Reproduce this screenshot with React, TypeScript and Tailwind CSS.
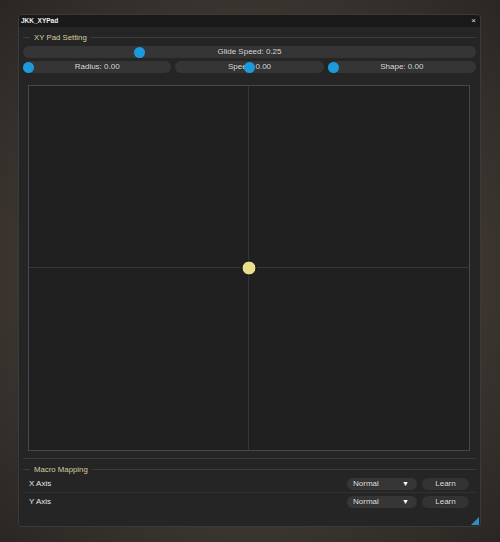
import React from "react";

const font = { fontFamily: '"Liberation Sans", Arial, sans-serif' };

function Slider({ label, value, min, max, width }: { label: string; value: number; min: number; max: number; width: string }) {
  const t = (value - min) / (max - min);
  return (
    <div className={`relative h-[12px] ${width} rounded-full bg-[#353535] flex items-center justify-center`}>
      <span className="text-[8px] text-[#e4e4e4] leading-none [text-shadow:0_0_1px_#000]">{label}</span>
      <div
        className="absolute top-[0.5px] w-[11px] h-[11px] rounded-full bg-[#1c9bdc]"
        style={{ left: `calc(${t * 100}% - ${t * 11}px)` }}
      />
    </div>
  );
}

function SectionHeader({ title }: { title: string }) {
  return (
    <div className="flex items-center h-[11px] gap-[4px]">
      <div className="w-[7px] h-px bg-[#3c3c3c]" />
      <span className="text-[7.8px] text-[#d6cf9f] leading-none">{title}</span>
      <div className="flex-1 h-px bg-[#3c3c3c]" />
    </div>
  );
}

function MappingRow({ axis }: { axis: string }) {
  return (
    <div className="flex items-center h-[13px]">
      <span className="text-[8px] text-[#e6e6e6] leading-none pl-[6px] flex-1">{axis}</span>
      <div className="w-[70px] h-[12px] rounded-[6px] bg-[#363636] flex items-center justify-between pl-[6px] pr-[8px]">
        <span className="text-[8px] text-[#ececec] leading-none [text-shadow:0_0_1px_#000]">Normal</span>
        <span className="text-[7px] text-white leading-none">▼</span>
      </div>
      <div className="ml-[5px] mr-[7px] w-[47px] h-[12px] rounded-[6px] bg-[#333333] flex items-center justify-center">
        <span className="text-[8px] text-[#e6e6e6] leading-none [text-shadow:0_0_1px_#000]">Learn</span>
      </div>
    </div>
  );
}

export default function App() {
  return (
    <div
      className="w-[500px] h-[542px] pl-[18px] pt-[14px] bg-[radial-gradient(ellipse_at_center,#4c443e_0%,#3e3732_60%,#2a2623_100%)]"
      style={font}
    >
      {/* Plugin window */}
      <div className="relative w-[463px] h-[513px] rounded-[4px] border border-[#3a3a3a] bg-[#252525] overflow-hidden flex flex-col">
        {/* Title bar */}
        <div className="h-[12px] bg-[#191919] flex items-center justify-between px-[2px]">
          <span className="text-[6.5px] font-bold text-[#f0f0f0] leading-none">JKK_XYPad</span>
          <span className="text-[8px] text-[#e0e0e0] leading-none mr-[2px]">×</span>
        </div>

        <div className="flex flex-col px-[4px] pt-[5px]">
          <SectionHeader title="XY Pad Setting" />
          <div className="mt-[3px] flex flex-col gap-[3px]">
            <Slider label="Glide Speed: 0.25" value={0.25} min={0} max={1} width="w-full" />
            <div className="flex gap-[4px]">
              <Slider label="Radius: 0.00" value={0} min={0} max={1} width="flex-1" />
              <Slider label="Speed: 0.00" value={0} min={-1} max={1} width="flex-1" />
              <Slider label="Shape: 0.00" value={0} min={0} max={1} width="flex-1" />
            </div>
          </div>

          {/* XY pad */}
          <div className="relative mt-[12px] ml-[5px] mr-[6px] h-[366px] border border-[#484848] bg-[#202020] grid grid-cols-2 grid-rows-2">
            <div className="border-r border-b border-[#363636]" />
            <div className="border-b border-[#363636]" />
            <div className="border-r border-[#363636]" />
            <div />
            <div className="absolute left-1/2 top-1/2 -translate-x-1/2 -translate-y-1/2 w-[15px] h-[15px] rounded-full bg-[#e9de8e] border border-[#0f0f0f]" />
          </div>

          <div className="mt-[7px] h-px bg-[#3a3a3a]" />
          <div className="mt-[5px]">
            <SectionHeader title="Macro Mapping" />
          </div>
          <div className="mt-[2px]">
            <MappingRow axis="X Axis" />
            <div className="my-[2px] h-px bg-[#303030]" />
            <MappingRow axis="Y Axis" />
          </div>
        </div>

        {/* Resize grip */}
        <svg className="absolute right-[1px] bottom-[1px]" width="8" height="8" viewBox="0 0 8 8">
          <path d="M8 0 L8 8 L0 8 Z" fill="#2a8fc4" />
        </svg>
      </div>
    </div>
  );
}
